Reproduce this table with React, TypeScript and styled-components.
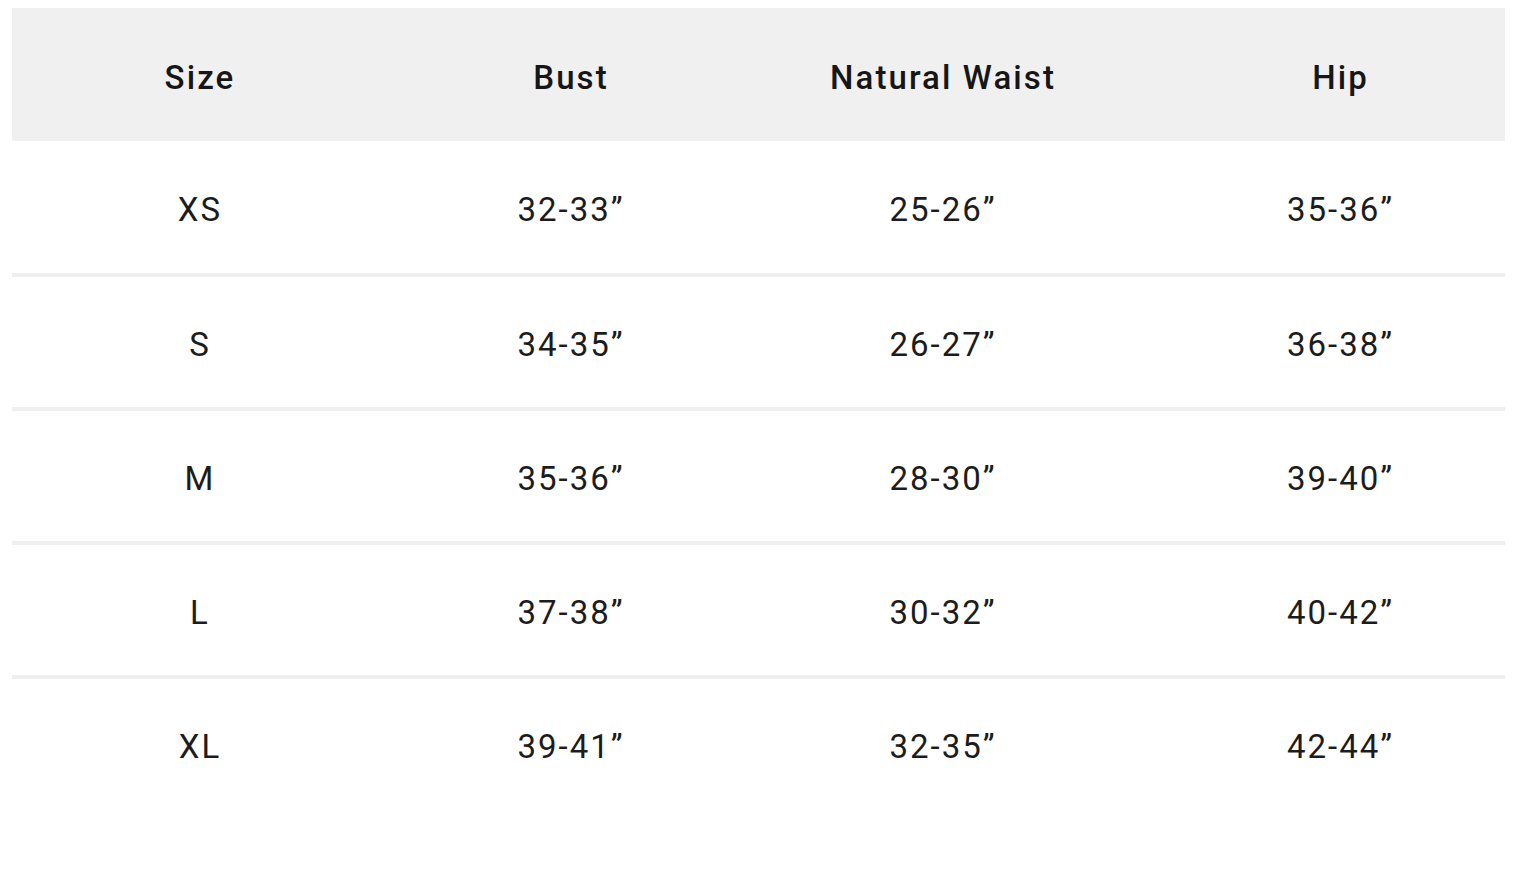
import React from "react";
import styled, { createGlobalStyle } from "styled-components";

const GlobalStyle = createGlobalStyle`
  html, body { margin: 0; padding: 0; background: #ffffff; }
  body { font-family: Roboto, "Noto Sans", "Liberation Sans", sans-serif; }
`;

const Page = styled.div`
  padding: 8px 9px 0 12px;
`;

const Table = styled.div`
  display: flex;
  flex-direction: column;
  width: 1493px;
`;

const Row = styled.div<{ $head?: boolean; $last?: boolean; $h: number }>`
  display: grid;
  grid-template-columns: 376px 366px 378px 1fr;
  align-items: center;
  height: ${(p) => p.$h}px;
  background: ${(p) => (p.$head ? "#f0f0f0" : "#ffffff")};
  border-bottom: ${(p) => (p.$head || p.$last ? "none" : "4px solid #efefef")};
  box-sizing: content-box;
`;

const Cell = styled.div<{ $head?: boolean; $shift?: number }>`
  text-align: center;
  padding-left: ${(p) => p.$shift ?? 0}px;
  padding-top: ${(p) => (p.$head ? 6 : 5)}px;
  font-size: 33px;
  font-weight: ${(p) => (p.$head ? 500 : 400)};
  letter-spacing: ${(p) => (p.$head ? "2.1px" : "2px")};
  color: ${(p) => (p.$head ? "#161616" : "#1c1c1c")};
  line-height: 1;
`;

const headers = ["Size", "Bust", "Natural Waist", "Hip"];
const rows = [
  ["XS", "32-33\u201D", "25-26\u201D", "35-36\u201D"],
  ["S", "34-35\u201D", "26-27\u201D", "36-38\u201D"],
  ["M", "35-36\u201D", "28-30\u201D", "39-40\u201D"],
  ["L", "37-38\u201D", "30-32\u201D", "40-42\u201D"],
  ["XL", "39-41\u201D", "32-35\u201D", "42-44\u201D"],
];

export default function App() {
  return (
    <>
      <GlobalStyle />
      <Page>
        <Table>
          <Row $head $h={133}>
            {headers.map((h, i) => (
              <Cell key={h} $head $shift={i === 3 ? 44 : 0}>
                {h}
              </Cell>
            ))}
          </Row>
          {rows.map((r, ri) => (
            <Row key={r[0]} $h={ri === 0 ? 132 : 130} $last={ri === rows.length - 1}>
              {r.map((c, i) => (
                <Cell key={i} $shift={i === 3 ? 44 : 0}>
                  {c}
                </Cell>
              ))}
            </Row>
          ))}
        </Table>
      </Page>
    </>
  );
}
